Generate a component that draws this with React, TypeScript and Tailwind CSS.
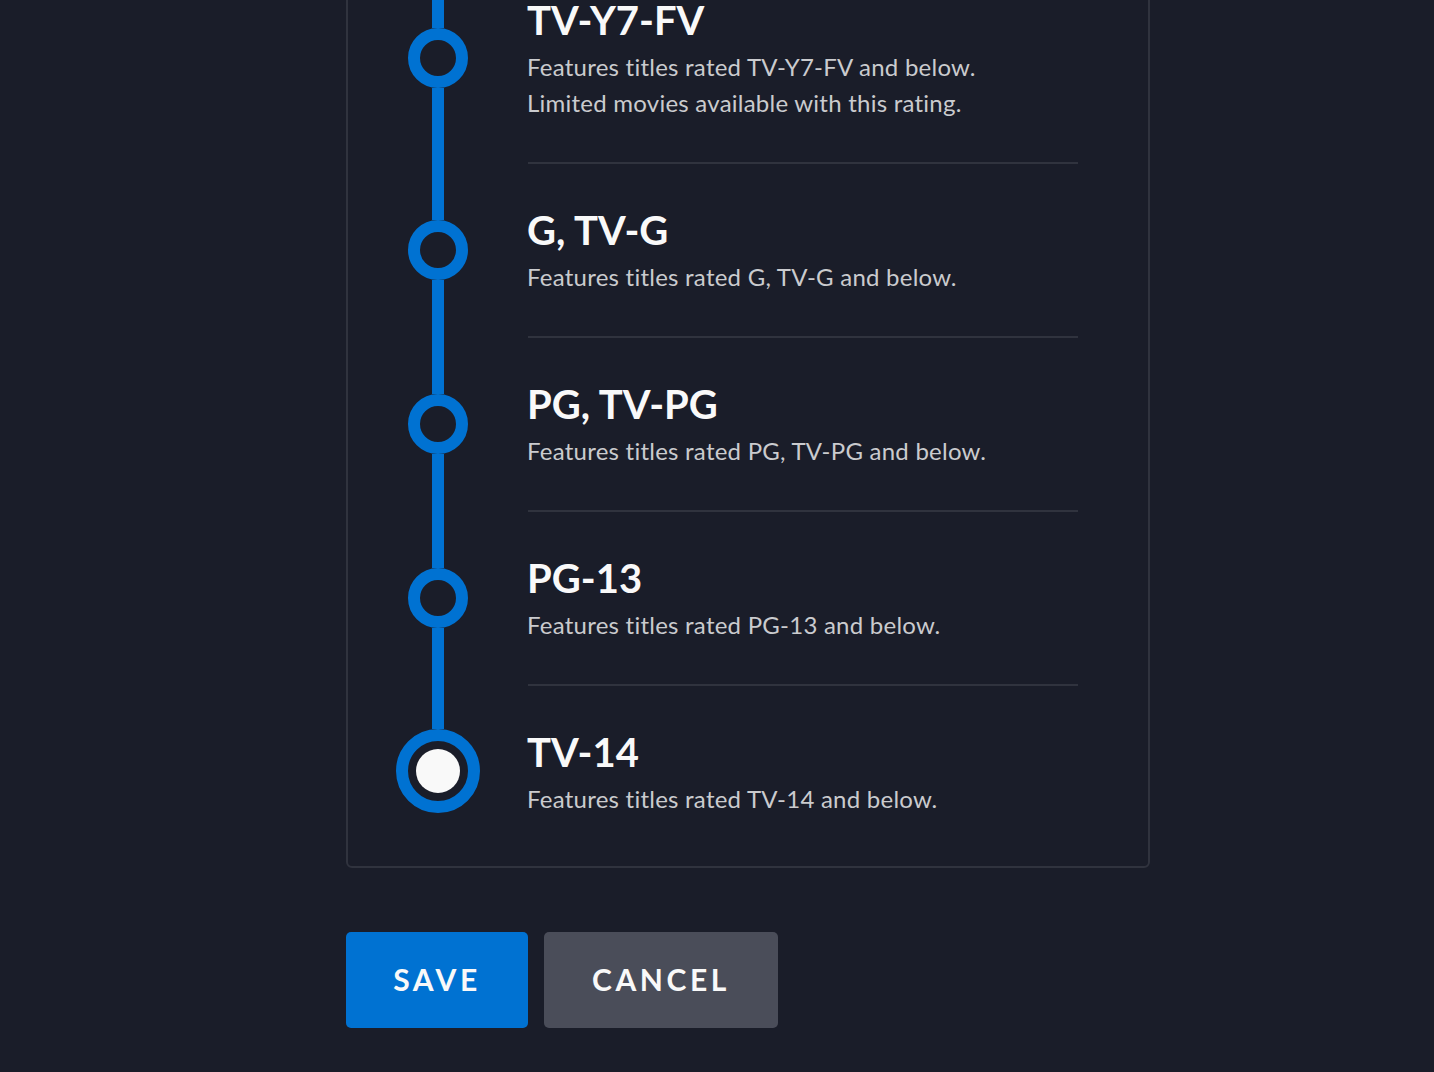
import React from "react";

type Rating = {
  title: string;
  lines: string[];
  selected?: boolean;
};

const ratings: Rating[] = [
  {
    title: "TV-Y7-FV",
    lines: [
      "Features titles rated TV-Y7-FV and below.",
      "Limited movies available with this rating.",
    ],
  },
  { title: "G, TV-G", lines: ["Features titles rated G, TV-G and below."] },
  { title: "PG, TV-PG", lines: ["Features titles rated PG, TV-PG and below."] },
  { title: "PG-13", lines: ["Features titles rated PG-13 and below."] },
  { title: "TV-14", lines: ["Features titles rated TV-14 and below."], selected: true },
];

function Marker({ selected }: { selected?: boolean }) {
  if (selected) {
    return (
      <div className="flex h-[84px] w-[84px] shrink-0 items-center justify-center rounded-full border-[12px] border-[#0072d2] bg-[#1a1d29]">
        <div className="h-[44px] w-[44px] rounded-full bg-[#f9f9f9]" />
      </div>
    );
  }
  return (
    <div className="h-[60px] w-[60px] shrink-0 rounded-full border-[12px] border-[#0072d2] bg-[#1a1d29]" />
  );
}

function RatingRow({ rating, last }: { rating: Rating; last: boolean }) {
  return (
    <div className="flex">
      {/* timeline rail with the step marker */}
      <div className="flex w-[180px] shrink-0 flex-col items-center">
        <div className="w-[12px] flex-1 bg-[#0072d2]" />
        <Marker selected={rating.selected} />
        <div className={`w-[12px] flex-1 ${last ? "" : "bg-[#0072d2]"}`} />
        <div className={`h-[2px] w-[12px] ${last ? "" : "bg-[#0072d2]"}`} />
      </div>
      <div
        className={`w-[550px] py-[41.5px] ${last ? "" : "border-b-2 border-[#30333e]"}`}
      >
        <div className="ml-[-1px] text-[40px] font-bold leading-[48px] text-[#f9f9f9]">
          {rating.title}
        </div>
        <div className="ml-[-1px] mt-[5px] text-[24px] leading-[36px] tracking-[0.01em] text-[#cacbce]">
          {rating.lines.map((l) => (
            <div key={l}>{l}</div>
          ))}
        </div>
      </div>
    </div>
  );
}

export default function App() {
  return (
    <div
      className="h-[1072px] overflow-hidden bg-[#1a1d29] pl-[346px]"
      style={{ fontFamily: "Lato, 'Noto Sans', sans-serif" }}
    >
      <div className="mt-[-48px] w-[804px] rounded-[6px] border-2 border-[#30333e] pb-[8px] pr-[70px]">
        {ratings.map((r, i) => (
          <RatingRow key={r.title} rating={r} last={i === ratings.length - 1} />
        ))}
      </div>
      <div className="mt-[64px] flex gap-[16px]">
        <button className="flex h-[96px] w-[182px] items-center justify-center rounded-[5px] bg-[#0072d2] pb-[2px] text-[30px] font-bold tracking-[0.12em] text-[#f9f9f9]">
          SAVE
        </button>
        <button className="flex h-[96px] w-[234px] items-center justify-center rounded-[5px] bg-[#4a4d59] pb-[2px] text-[30px] font-bold tracking-[0.12em] text-[#f9f9f9]">
          CANCEL
        </button>
      </div>
    </div>
  );
}
